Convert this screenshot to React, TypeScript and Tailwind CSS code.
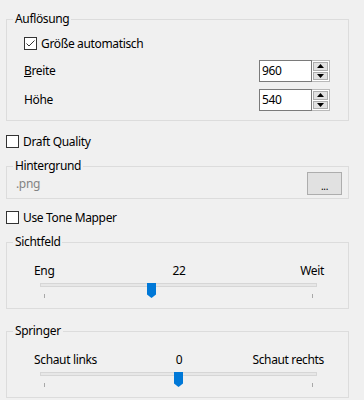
import type { ReactNode } from "react";

function Group({ title, className, children }: { title: string; className?: string; children: ReactNode }) {
  return (
    <fieldset className={`ml-[6px] w-[343px] min-w-0 border border-[#dcdcdc] ${className ?? ""}`}>
      <legend className="ml-[6px] px-[2px] leading-[14px]">{title}</legend>
      {children}
    </fieldset>
  );
}

function Check({ checked, label }: { checked?: boolean; label: string }) {
  return (
    <div className="flex h-[13px] items-center gap-[4px]">
      <div className="h-[13px] w-[13px] shrink-0 border border-[#333333] bg-white">
        {checked && (
          <svg width="11" height="11" viewBox="0 0 11 11">
            <path d="M1.5 5.5 L4 8 L9.5 2.5" fill="none" stroke="#333333" strokeWidth="1" />
          </svg>
        )}
      </div>
      <span className="leading-[16px]">{label}</span>
    </div>
  );
}

function Arrow({ up }: { up?: boolean }) {
  return (
    <svg width="7" height="4" viewBox="0 0 7 4">
      <path d={up ? "M0 4 L3.5 0 L7 4 Z" : "M0 0 L3.5 4 L7 0 Z"} fill="#000" />
    </svg>
  );
}

function Spin({ value }: { value: string }) {
  return (
    <div className="flex h-[22px]">
      <div className="flex w-[53px] items-center border border-[#7a7a7a] bg-white pl-[2px]">{value}</div>
      <div className="flex w-[18px] flex-col gap-[1px] border border-l-0 border-[#b9b9b9] bg-white p-[1px]">
        <div className="flex flex-1 items-center justify-center border border-[#adadad] bg-[#e1e1e1]">
          <Arrow up />
        </div>
        <div className="flex flex-1 items-center justify-center border border-[#adadad] bg-[#e1e1e1]">
          <Arrow />
        </div>
      </div>
    </div>
  );
}

function Slider({ left, right, value, pos }: { left: string; right: string; value: string; pos: number }) {
  return (
    <div className="pb-[5px]">
      <div className="mt-[14px] grid grid-cols-3 pl-[27px] pr-[24px] leading-[16px]">
        <span>{left}</span>
        <span className="text-center">{value}</span>
        <span className="text-right">{right}</span>
      </div>
      <div className="relative ml-[33px] mt-[4px] h-[20px] w-[277px]">
        <div className="mt-[4px] h-[4px] border border-[#d6d6d6] bg-[#e7e7e7]" />
        <div className="mt-[7px] flex justify-between px-[4px]">
          <div className="h-[4px] w-[1px] bg-[#a8a8a8]" />
          <div className="h-[4px] w-[1px] bg-[#a8a8a8]" />
        </div>
        <svg className="absolute top-0" style={{ left: pos }} width="9" height="15" viewBox="0 0 9 15">
          <path d="M0 0 H9 V11.5 L4.5 15 L0 11.5 Z" fill="#0078d7" />
        </svg>
      </div>
    </div>
  );
}

export default function App() {
  return (
    <div className="h-[400px] w-[364px] overflow-hidden bg-[#f0f0f0] pt-[12px] font-['Segoe_UI','Noto_Sans',sans-serif] text-[12px] tracking-[-0.35px] text-black">
      <Group title="Auflösung">
        <div className="pb-[9px] pl-[17px] pr-[18px] pt-[11px]">
          <Check checked label="Größe automatisch" />
          <div className="mt-[10px] flex items-center justify-between">
            <span>
              <span className="underline">B</span>reite
            </span>
            <Spin value="960" />
          </div>
          <div className="mt-[7px] flex items-center justify-between">
            <span>Höhe</span>
            <Spin value="540" />
          </div>
        </div>
      </Group>

      <div className="ml-[6px] mt-[14px]">
        <Check label="Draft Quality" />
      </div>

      <Group title="Hintergrund" className="mt-[11px]">
        <div className="-mt-[1px] flex items-center justify-between pb-[3px] pl-[9px] pr-[6px]">
          <span className="text-[#838383]">.png</span>
          <button className="flex h-[23px] w-[35px] items-end justify-center border border-[#adadad] bg-[#e1e1e1] pb-[3px] text-[10px] leading-[10px]">
            ...
          </button>
        </div>
      </Group>

      <div className="ml-[6px] mt-[12px]">
        <Check label="Use Tone Mapper" />
      </div>

      <Group title="Sichtfeld" className="mt-[11px]">
        <Slider left="Eng" right="Weit" value="22" pos={107} />
      </Group>

      <Group title="Springer" className="mt-[15px]">
        <Slider left="Schaut links" right="Schaut rechts" value="0" pos={134} />
      </Group>
    </div>
  );
}
